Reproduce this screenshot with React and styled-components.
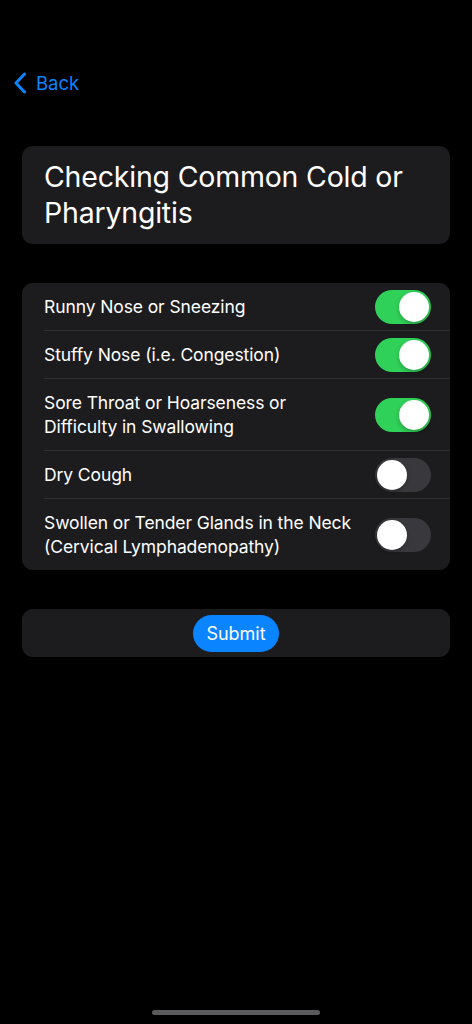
import { useState } from 'react'
import styled, { createGlobalStyle } from 'styled-components'

const GlobalStyle = createGlobalStyle`
  html, body {
    margin: 0;
    padding: 0;
    background: #000;
  }
  body {
    font-family: Inter, "Noto Sans", "Liberation Sans", sans-serif;
    color: #fff;
    -webkit-font-smoothing: antialiased;
  }
`

const Screen = styled.div`
  min-height: 1024px;
  background: #000;
  display: flex;
  flex-direction: column;
  position: relative;
`

const NavBar = styled.div`
  display: flex;
  align-items: center;
  padding: 72px 0 0 13px;
  height: 22px;
`

const BackButton = styled.button`
  display: flex;
  align-items: center;
  gap: 9px;
  background: none;
  border: 0;
  padding: 0;
  color: #0a84ff;
  font-family: inherit;
  font-size: 18.5px;
  cursor: pointer;
`

const Content = styled.main`
  display: flex;
  flex-direction: column;
  gap: 39px;
  padding: 52px 22px 0;
`

const Card = styled.section`
  background: #1c1c1e;
  border-radius: 11px;
`

const Title = styled.h1`
  margin: 0;
  padding: 13px 22px;
  font-size: 28.5px;
  font-weight: 400;
  line-height: 36px;
  letter-spacing: -0.2px;
`

const Row = styled.label`
  display: flex;
  align-items: center;
  justify-content: space-between;
  gap: 12px;
  margin-left: 22px;
  padding-right: 19px;
  border-top: ${(p) => (p.$first ? 'none' : '1px solid #2f2f31')};
`

const RowText = styled.span`
  padding: 12px 0 11px;
  font-size: 17.5px;
  line-height: 24px;
  letter-spacing: -0.1px;
  color: #fff;
`

const Track = styled.span`
  flex: none;
  position: relative;
  width: 56px;
  height: 34px;
  border-radius: 17px;
  background: ${(p) => (p.$on ? '#30d158' : '#39393d')};
  transition: background 0.2s;
`

const Knob = styled.span`
  position: absolute;
  top: 2px;
  left: ${(p) => (p.$on ? '24px' : '2px')};
  width: 30px;
  height: 30px;
  border-radius: 50%;
  background: #fff;
  box-shadow: 0 2px 4px rgba(0, 0, 0, 0.25);
  transition: left 0.2s;
`

const SubmitCard = styled(Card)`
  display: flex;
  justify-content: center;
  align-items: center;
  height: 48px;
`

const SubmitButton = styled.button`
  height: 37px;
  width: 86px;
  border: 0;
  border-radius: 19px;
  background: #0a84ff;
  color: #fff;
  font-family: inherit;
  font-size: 18px;
  cursor: pointer;
`

const HomeIndicator = styled.div`
  position: absolute;
  left: 152px;
  bottom: 9px;
  width: 168px;
  height: 5px;
  border-radius: 3px;
  background: #5b5b5d;
`

const Toggle = ({ on, onChange }) => (
  <Track $on={on} onClick={onChange}>
    <Knob $on={on} />
  </Track>
)

const symptoms = [
  { label: 'Runny Nose or Sneezing', on: true },
  { label: 'Stuffy Nose (i.e. Congestion)', on: true },
  { label: 'Sore Throat or Hoarseness or Difficulty in Swallowing', on: true, lines: ['Sore Throat or Hoarseness or', 'Difficulty in Swallowing'] },
  { label: 'Dry Cough', on: false },
  { label: 'Swollen or Tender Glands in the Neck (Cervical Lymphadenopathy)', on: false, lines: ['Swollen or Tender Glands in the Neck', '(Cervical Lymphadenopathy)'] },
]

const App = () => {
  const [checked, setChecked] = useState(symptoms.map((s) => s.on))

  const toggle = (i) => {
    setChecked((prev) => prev.map((v, j) => (j === i ? !v : v)))
  }

  return (
    <>
      <GlobalStyle />
      <Screen>
        <NavBar>
          <BackButton>
            <svg width="14" height="22" viewBox="0 0 14 22" fill="none">
              <path d="M11.5 2 L3 11 L11.5 20" stroke="#0a84ff" strokeWidth="3" strokeLinecap="round" strokeLinejoin="round" />
            </svg>
            Back
          </BackButton>
        </NavBar>
        <Content>
          <Card>
            <Title>
              Checking Common Cold or
              <br />
              Pharyngitis
            </Title>
          </Card>
          <Card>
            {symptoms.map((s, i) => (
              <Row key={s.label} $first={i === 0}>
                <RowText>
                  {s.lines ? (
                    <>
                      {s.lines[0]}
                      <br />
                      {s.lines[1]}
                    </>
                  ) : s.label}
                </RowText>
                <Toggle on={checked[i]} onChange={() => toggle(i)} />
              </Row>
            ))}
          </Card>
          <SubmitCard>
            <SubmitButton>Submit</SubmitButton>
          </SubmitCard>
        </Content>
        <HomeIndicator />
      </Screen>
    </>
  )
}

export default App
